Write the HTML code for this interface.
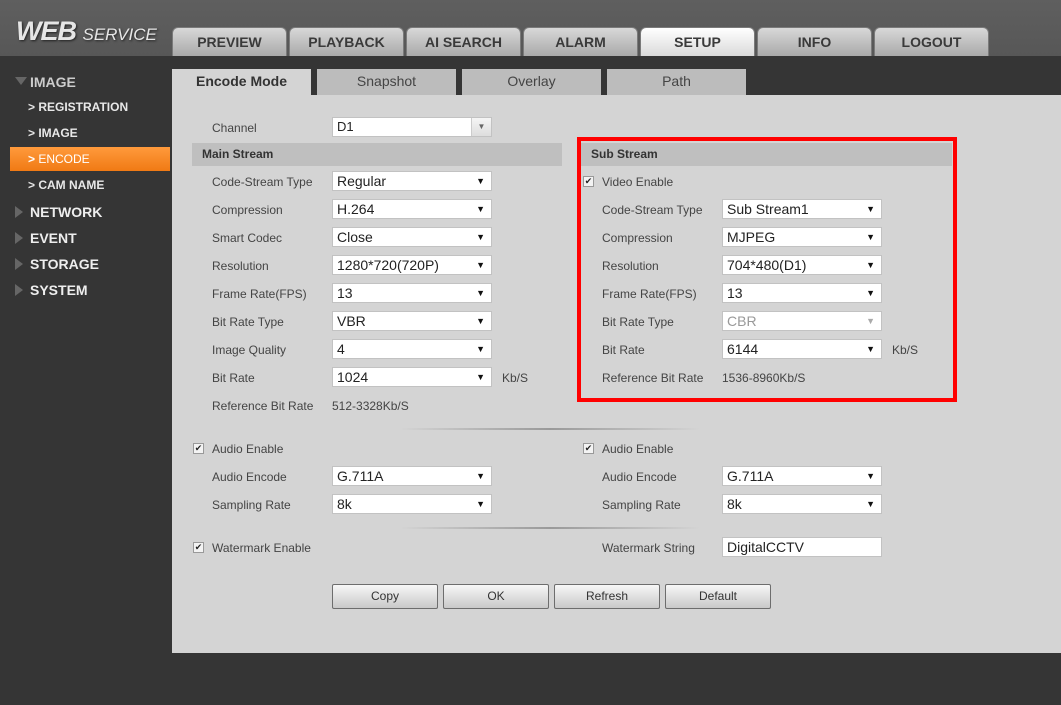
<!DOCTYPE html>
<html><head><meta charset="utf-8">
<style>
*{margin:0;padding:0;box-sizing:border-box}
body{width:1061px;height:705px;position:relative;overflow:hidden;background:#353535;font-family:"Liberation Sans",Arial,sans-serif;font-size:12px;color:#333}
.a{position:absolute}
#top{left:0;top:0;width:1061px;height:56px;background:linear-gradient(#5f5f5f,#575757)}
.logo{left:16px;top:16px;color:#e6e6e6;font-style:italic;font-weight:bold;font-size:27px;letter-spacing:-1px;text-shadow:1px 1px 2px #222}
.logo span{font-size:17px;font-weight:normal;letter-spacing:0}
.nt{top:27px;height:29px;width:115px;border-radius:6px 6px 0 0;background:linear-gradient(#d8d8d8,#a9a9a9);border:1px solid #7a7a7a;border-bottom:none;text-align:center;line-height:28px;font-weight:bold;font-size:14px;color:#3a3a3a}
.nt.on{background:linear-gradient(#ffffff,#dadada)}
.sb{color:#e8e8e8;font-weight:bold;font-size:12px}
.sm{font-size:14px;color:#eee;font-weight:bold}
.tri{width:0;height:0;border-top:6px solid transparent;border-bottom:6px solid transparent;border-left:8px solid #666}
#panel{left:172px;top:95px;width:889px;height:558px;background:#d4d4d4}
.st{top:69px;height:26px;width:139px;background:#bcbcbc;text-align:center;line-height:25px;font-size:14px;color:#444}
.lbl{color:#444;font-size:12px}
.sel{height:20px;width:160px;background:#fff;border:1px solid #c2c2c2;font-size:14px;line-height:18px;padding-left:4px;color:#222}
.sel:after{content:"▼";position:absolute;right:6px;top:0;font-size:9px;color:#111}
.sel.dis{color:#999}.sel.dis:after{color:#aaa}
.hdr{height:23px;background:#bfbfbf;font-weight:bold;color:#333;font-size:12px;line-height:23px;padding-left:10px}
.cb{width:11px;height:11px;border:1px solid #999;background:#f3f3f3;font-size:9px;line-height:9px;text-align:center;color:#222}
.btn{top:584px;width:106px;height:25px;border:1px solid #6d6d6d;background:linear-gradient(#f7f7f7,#c9c9c9);text-align:center;line-height:23px;color:#333;font-size:12px;border-radius:2px}
.sep{height:2px;background:linear-gradient(90deg,rgba(150,150,150,0),#999 50%,rgba(150,150,150,0))}
</style></head><body>
<div id="top" class="a"></div>
<div class="a logo">WEB <span>SERVICE</span></div>
<div class="a nt" style="left:172px">PREVIEW</div>
<div class="a nt" style="left:289px">PLAYBACK</div>
<div class="a nt" style="left:406px">AI SEARCH</div>
<div class="a nt" style="left:523px">ALARM</div>
<div class="a nt on" style="left:640px">SETUP</div>
<div class="a nt" style="left:757px">INFO</div>
<div class="a nt" style="left:874px">LOGOUT</div>

<div class="a" style="left:15px;top:77px;width:0;height:0;border-left:6px solid transparent;border-right:6px solid transparent;border-top:8px solid #666"></div>
<div class="a sm" style="left:30px;top:74px;color:#ccc">IMAGE</div>
<div class="a sb" style="left:28px;top:100px">&gt; REGISTRATION</div>
<div class="a sb" style="left:28px;top:126px">&gt; IMAGE</div>
<div class="a" style="left:10px;top:147px;width:160px;height:24px;background:linear-gradient(#ff9a3c,#f07a14)"></div>
<div class="a sb" style="left:28px;top:152px;color:#fff;font-weight:normal"><b>&gt;</b> ENCODE</div>
<div class="a sb" style="left:28px;top:178px">&gt; CAM NAME</div>
<div class="a tri" style="left:15px;top:206px"></div><div class="a sm" style="left:30px;top:204px">NETWORK</div>
<div class="a tri" style="left:15px;top:232px"></div><div class="a sm" style="left:30px;top:230px">EVENT</div>
<div class="a tri" style="left:15px;top:258px"></div><div class="a sm" style="left:30px;top:256px">STORAGE</div>
<div class="a tri" style="left:15px;top:284px"></div><div class="a sm" style="left:30px;top:282px">SYSTEM</div>

<div id="panel" class="a"></div>
<div class="a st" style="left:172px;background:#d4d4d4;font-weight:bold;color:#333">Encode Mode</div>
<div class="a st" style="left:317px">Snapshot</div>
<div class="a st" style="left:462px">Overlay</div>
<div class="a st" style="left:607px">Path</div>

<div class="a lbl" style="left:212px;top:121px">Channel</div>
<div class="a sel" style="left:332px;top:117px;width:160px;font-size:13px">D1</div>
<div class="a" style="left:471px;top:118px;width:20px;height:18px;background:linear-gradient(#f5f5f5,#ddd);border-left:1px solid #ccc;text-align:center;font-size:8px;line-height:18px;color:#666">▼</div>

<div class="a hdr" style="left:192px;top:143px;width:370px">Main Stream</div>

<div class="a lbl" style="left:212px;top:175px">Code-Stream Type</div><div class="a sel" style="left:332px;top:171px">Regular</div>
<div class="a lbl" style="left:212px;top:203px">Compression</div><div class="a sel" style="left:332px;top:199px">H.264</div>
<div class="a lbl" style="left:212px;top:231px">Smart Codec</div><div class="a sel" style="left:332px;top:227px">Close</div>
<div class="a lbl" style="left:212px;top:259px">Resolution</div><div class="a sel" style="left:332px;top:255px">1280*720(720P)</div>
<div class="a lbl" style="left:212px;top:287px">Frame Rate(FPS)</div><div class="a sel" style="left:332px;top:283px">13</div>
<div class="a lbl" style="left:212px;top:315px">Bit Rate Type</div><div class="a sel" style="left:332px;top:311px">VBR</div>
<div class="a lbl" style="left:212px;top:343px">Image Quality</div><div class="a sel" style="left:332px;top:339px">4</div>
<div class="a lbl" style="left:212px;top:371px">Bit Rate</div><div class="a sel" style="left:332px;top:367px">1024</div><div class="a lbl" style="left:502px;top:371px">Kb/S</div>
<div class="a lbl" style="left:212px;top:399px">Reference Bit Rate</div><div class="a lbl" style="left:332px;top:399px">512-3328Kb/S</div>

<div class="a" style="left:577px;top:137px;width:380px;height:265px;border:4px solid #f00"></div>
<div class="a hdr" style="left:581px;top:143px;width:371px">Sub Stream</div>
<div class="a cb" style="left:583px;top:176px">✔</div><div class="a lbl" style="left:602px;top:175px">Video Enable</div>
<div class="a lbl" style="left:602px;top:203px">Code-Stream Type</div><div class="a sel" style="left:722px;top:199px">Sub Stream1</div>
<div class="a lbl" style="left:602px;top:231px">Compression</div><div class="a sel" style="left:722px;top:227px">MJPEG</div>
<div class="a lbl" style="left:602px;top:259px">Resolution</div><div class="a sel" style="left:722px;top:255px">704*480(D1)</div>
<div class="a lbl" style="left:602px;top:287px">Frame Rate(FPS)</div><div class="a sel" style="left:722px;top:283px">13</div>
<div class="a lbl" style="left:602px;top:315px">Bit Rate Type</div><div class="a sel dis" style="left:722px;top:311px">CBR</div>
<div class="a lbl" style="left:602px;top:343px">Bit Rate</div><div class="a sel" style="left:722px;top:339px">6144</div><div class="a lbl" style="left:892px;top:343px">Kb/S</div>
<div class="a lbl" style="left:602px;top:371px">Reference Bit Rate</div><div class="a lbl" style="left:722px;top:371px">1536-8960Kb/S</div>

<div class="a sep" style="left:400px;top:428px;width:300px"></div>
<div class="a cb" style="left:193px;top:443px">✔</div><div class="a lbl" style="left:212px;top:442px">Audio Enable</div>
<div class="a cb" style="left:583px;top:443px">✔</div><div class="a lbl" style="left:602px;top:442px">Audio Enable</div>
<div class="a lbl" style="left:212px;top:470px">Audio Encode</div><div class="a sel" style="left:332px;top:466px">G.711A</div>
<div class="a lbl" style="left:602px;top:470px">Audio Encode</div><div class="a sel" style="left:722px;top:466px">G.711A</div>
<div class="a lbl" style="left:212px;top:498px">Sampling Rate</div><div class="a sel" style="left:332px;top:494px">8k</div>
<div class="a lbl" style="left:602px;top:498px">Sampling Rate</div><div class="a sel" style="left:722px;top:494px">8k</div>
<div class="a sep" style="left:400px;top:527px;width:300px"></div>
<div class="a cb" style="left:193px;top:542px">✔</div><div class="a lbl" style="left:212px;top:541px">Watermark Enable</div>
<div class="a lbl" style="left:602px;top:541px">Watermark String</div>
<div class="a sel" style="left:722px;top:537px;width:160px;font-size:14px">DigitalCCTV</div>
<div class="a" style="left:860px;top:538px;width:20px;height:18px;background:#fff"></div>

<div class="a btn" style="left:332px">Copy</div>
<div class="a btn" style="left:443px">OK</div>
<div class="a btn" style="left:554px">Refresh</div>
<div class="a btn" style="left:665px">Default</div>
</body></html>
